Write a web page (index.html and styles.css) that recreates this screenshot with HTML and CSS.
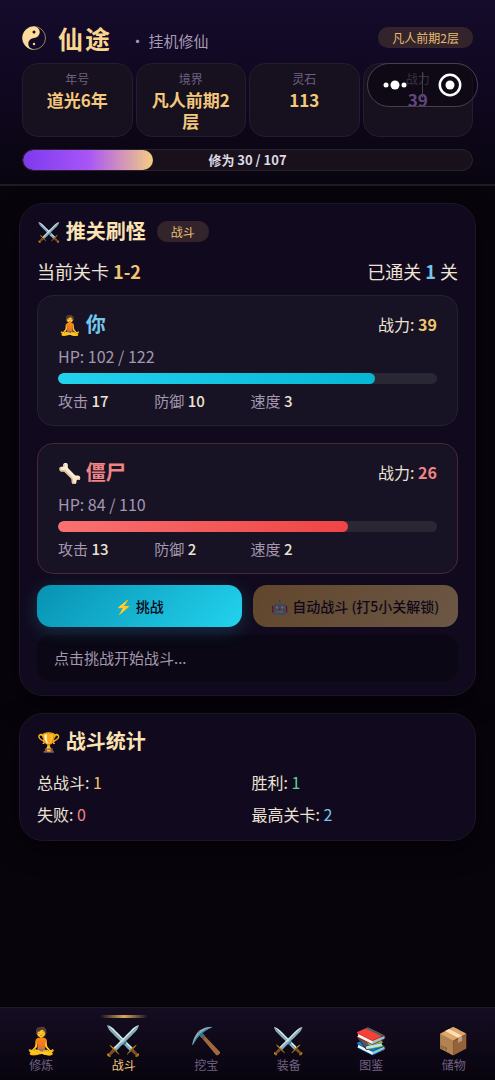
FILE: index.html
```html
<!DOCTYPE html>
<html lang="zh-CN">

<head>
    <meta charset="UTF-8">
    <meta name="viewport" content="width=device-width, initial-scale=1.0">
    <title>仙途 · 挂机修仙</title>
    <link rel="stylesheet" href="styles.css">
</head>

<body>
    <header class="top-bar">
        <div class="title-row">
            <svg class="logo" viewBox="0 0 24 24" aria-hidden="true">
                <circle cx="12" cy="12" r="11.5" fill="none" stroke="#f3cf8a" stroke-width="0.6" />
                <path d="M12 .5A11.5 11.5 0 0 0 12 23.5A5.75 5.75 0 0 1 12 12A5.75 5.75 0 0 0 12 .5Z" fill="#fbdc9c" />
                <circle cx="12" cy="6" r="1.500" fill="#120a22" />
                <circle cx="12" cy="18" r="1.200" fill="#fbdc9c" />
            </svg>
            <h1 class="title">仙途</h1>
            <span class="subtitle">· 挂机修仙</span>
            <span class="badge badge-right">凡人前期2层</span>
        </div>
        <div class="stats">
            <div class="stat"><span class="stat-label">年号</span><span class="stat-value">道光6年</span></div>
            <div class="stat"><span class="stat-label">境界</span><span class="stat-value">凡人前期2层</span></div>
            <div class="stat"><span class="stat-label">灵石</span><span class="stat-value">113</span></div>
            <div class="stat"><span class="stat-label">战力</span><span class="stat-value power">39</span></div>
        </div>
        <div class="exp">
            <div class="exp-fill" style="width: 29%"></div>
            <span class="exp-text">修为 30 / 107</span>
        </div>
        <div class="capsule">
            <button class="capsule-btn" type="button" aria-label="更多">
                <svg width="24" height="24" viewBox="0 0 24 24" fill="#fff">
                    <circle cx="3" cy="12" r="2.500" />
                    <circle cx="12" cy="12" r="4.500" />
                    <circle cx="21" cy="12" r="2.500" />
                </svg>
            </button>
            <button class="capsule-btn" type="button" aria-label="关闭">
                <svg width="24" height="24" viewBox="0 0 24 24">
                    <circle cx="12" cy="12" r="10.2" fill="none" stroke="#fff" stroke-width="2.500" />
                    <circle cx="12" cy="12" r="4.500" fill="#fff" />
                </svg>
            </button>
        </div>
    </header>

    <main class="content">
        <section class="card">
            <div class="card-head">
                <h2 class="card-title"><span class="emoji">⚔️</span>推关刷怪</h2>
                <span class="badge">战斗</span>
            </div>
            <div class="stage">
                <span>当前关卡 <b class="gold">1-2</b></span>
                <span>已通关 <b class="blue">1</b> 关</span>
            </div>

            <div class="fighter">
                <div class="fighter-head">
                    <h3 class="fighter-name blue"><span class="emoji">🧘</span>你</h3>
                    <span>战力: <b class="gold">39</b></span>
                </div>
                <div class="hp-text">HP: 102 / 122</div>
                <div class="hp-bar">
                    <div class="hp-fill" style="width: 83.6%"></div>
                </div>
                <div class="attrs">
                    <span>攻击 <b>17</b></span>
                    <span>防御 <b>10</b></span>
                    <span>速度 <b>3</b></span>
                </div>
            </div>

            <div class="fighter enemy">
                <div class="fighter-head">
                    <h3 class="fighter-name red"><span class="emoji">🦴</span>僵尸</h3>
                    <span>战力: <b class="red">26</b></span>
                </div>
                <div class="hp-text">HP: 84 / 110</div>
                <div class="hp-bar">
                    <div class="hp-fill" style="width: 76.4%"></div>
                </div>
                <div class="attrs">
                    <span>攻击 <b>13</b></span>
                    <span>防御 <b>2</b></span>
                    <span>速度 <b>2</b></span>
                </div>
            </div>

            <div class="actions">
                <button class="btn btn-fight" type="button">⚡ 挑战</button>
                <button class="btn btn-auto" type="button" disabled>🤖 自动战斗 (打5小关解锁)</button>
            </div>
            <div class="log">点击挑战开始战斗...</div>
        </section>

        <section class="card">
            <div class="card-head">
                <h2 class="card-title"><span class="emoji">🏆</span>战斗统计</h2>
            </div>
            <div class="totals">
                <span>总战斗: <span class="gold">1</span></span>
                <span>胜利: <span class="green">1</span></span>
                <span>失败: <span class="red">0</span></span>
                <span>最高关卡: <span class="blue">2</span></span>
            </div>
        </section>
    </main>

    <nav class="tabs">
        <button class="tab" type="button"><span class="tab-icon">🧘</span>修炼</button>
        <button class="tab active" type="button"><span class="tab-icon">⚔️</span>战斗</button>
        <button class="tab" type="button"><span class="tab-icon">⛏️</span>挖宝</button>
        <button class="tab" type="button"><span class="tab-icon">⚔️</span>装备</button>
        <button class="tab" type="button"><span class="tab-icon">📚</span>图鉴</button>
        <button class="tab" type="button"><span class="tab-icon">📦</span>储物</button>
    </nav>
</body>

</html>
```
FILE: styles.css
```css
* {
    box-sizing: border-box;
}

body {
    margin: 0;
    min-height: 100vh;
    display: flex;
    flex-direction: column;
    background: #07040c;
    color: #ece3d4;
    font-family: "Noto Sans CJK SC", "Noto Color Emoji", sans-serif;
    font-size: 16px;
    line-height: 24px;
}

h1,
h2,
h3 {
    margin: 0;
}

button {
    font-family: inherit;
    border: none;
    padding: 0;
    cursor: pointer;
}

.gold {
    color: #f0c572;
}

.blue {
    color: #74c7ec;
}

.red {
    color: #ee8484;
}

.green {
    color: #5fd09a;
}

/* header */
.top-bar {
    position: relative;
    padding: 20px 22px 13px;
    background: linear-gradient(180deg, #150b2b 0%, #100822 45%, #09050f 100%);
    border-bottom: 2px solid #1f1a26;
}

.title-row {
    display: flex;
    align-items: center;
    height: 35px;
    margin-bottom: 8px;
}

.logo {
    width: 24px;
    height: 24px;
    margin-right: 12px;
}

.title {
    font-size: 25px;
    letter-spacing: 2px;
    color: #f9d68f;
}

.subtitle {
    margin: 6px 0 0 18px;
    font-size: 15px;
    color: #a89bb3;
}

.badge {
    padding: 0 14px;
    border-radius: 10px;
    background: #33242c;
    color: #e6bd73;
    font-size: 12px;
    line-height: 21px;
}

.badge-right {
    margin-left: auto;
}

.stats {
    display: grid;
    grid-template-columns: repeat(4, 1fr);
    gap: 3px;
}

.stat {
    display: flex;
    flex-direction: column;
    min-height: 74px;
    padding: 5px 12px;
    border: 1px solid #241d2d;
    border-radius: 16px;
    background: #17101f;
    text-align: center;
}

.stat-label {
    font-size: 12px;
    line-height: 20px;
    color: #6f6080;
}

.stat-value {
    font-size: 17px;
    font-weight: bold;
    line-height: 21px;
    color: #f3c87c;
}

.stat-value.power {
    color: #c38af0;
}

.exp {
    position: relative;
    height: 22px;
    margin-top: 12px;
    border: 1px solid #2a222f;
    border-radius: 11px;
    background: #18111c;
    overflow: hidden;
}

.exp-fill {
    height: 100%;
    border-radius: 10px;
    background: linear-gradient(90deg, #7c3aed 0%, #a855f7 50%, #f5cc83 100%);
}

.exp-text {
    position: absolute;
    inset: 0;
    text-align: center;
    font-size: 13px;
    font-weight: bold;
    line-height: 20px;
    color: #dfdae6;
}

.capsule {
    position: absolute;
    top: 63px;
    right: 17px;
    display: flex;
    width: 111px;
    height: 44px;
    border: 1px solid #46404d;
    border-radius: 22px;
    background: rgba(5, 2, 10, 0.5);
}

.capsule-btn {
    flex: 1;
    display: flex;
    align-items: center;
    justify-content: center;
    margin: 8px 0;
    background: none;
}

.capsule-btn + .capsule-btn {
    border-left: 1px solid #46404d;
}

/* cards */
.content {
    flex: 1;
    display: flex;
    flex-direction: column;
    gap: 17px;
    padding: 17px 19px 90px;
}

.card {
    padding: 15px 17px 14px;
    border: 1px solid #1c1627;
    border-radius: 24px;
    background: #110a1e;
    box-shadow: 0 8px 24px rgba(0, 0, 0, 0.5);
}

.card-head {
    display: flex;
    align-items: center;
    gap: 11px;
    margin-bottom: 16px;
}

.card-title {
    display: flex;
    align-items: center;
    gap: 5px;
    font-size: 20px;
    color: #fbe3b4;
}

.emoji {
    font-size: 19px;
    font-weight: normal;
}

.stage {
    display: flex;
    justify-content: space-between;
    margin-bottom: 12px;
    font-size: 18px;
}

.fighter {
    padding: 16px 20px 12px;
    margin-bottom: 17px;
    border: 1px solid #262130;
    border-radius: 16px;
    background: #171324;
}

.fighter.enemy {
    margin-bottom: 11px;
    border-color: #4b2637;
}

.fighter-head {
    display: flex;
    justify-content: space-between;
    align-items: center;
    margin-bottom: 8px;
}

.fighter-name {
    display: flex;
    align-items: center;
    gap: 4px;
    font-size: 20px;
}

.hp-text {
    margin-bottom: 5px;
    color: #a497b0;
}

.hp-bar {
    height: 11px;
    border-radius: 6px;
    background: #2a2734;
    overflow: hidden;
}

.hp-fill {
    height: 100%;
    border-radius: 6px;
    background: linear-gradient(90deg, #22d3ee, #06b6d4);
}

.enemy .hp-fill {
    background: linear-gradient(90deg, #f87171, #ef4444);
}

.attrs {
    display: grid;
    grid-template-columns: repeat(4, 1fr);
    gap: 6px;
    margin-top: 5px;
    font-size: 15px;
    color: #a497b0;
}

.attrs b {
    font-weight: 500;
    color: #ece3d4;
}

.actions {
    display: grid;
    grid-template-columns: 1fr 1fr;
    gap: 11px;
    margin-bottom: 8px;
}

.btn {
    height: 42px;
    border-radius: 14px;
    font-size: 14px;
    font-weight: 500;
    color: #0b0714;
}

.btn-fight {
    background: linear-gradient(135deg, #0891b2, #22d3ee);
    box-shadow: 0 4px 18px rgba(34, 211, 238, 0.2);
}

.btn-auto {
    background: linear-gradient(135deg, #d9a03f, #f5cc83);
    opacity: 0.4;
}

.log {
    padding: 11px 17px;
    border-radius: 14px;
    background: #0b0714;
    font-size: 15px;
    color: #a497b0;
}

.totals {
    display: grid;
    grid-template-columns: 1fr 1fr;
    gap: 8px;
    padding-top: 1px;
}

/* bottom tabs */
.tabs {
    position: fixed;
    left: 0;
    right: 0;
    bottom: 0;
    display: flex;
    height: 73px;
    border-top: 1px solid #1f1a2a;
    background: linear-gradient(180deg, #150d22, #08040e);
}

.tab {
    position: relative;
    flex: 1;
    display: flex;
    flex-direction: column;
    align-items: center;
    padding-top: 17px;
    background: none;
    font-size: 12px;
    line-height: 16px;
    color: #6f6080;
}

.tab-icon {
    font-family: "Noto Color Emoji", sans-serif;
    font-size: 26px;
    line-height: 32px;
}

.tab.active {
    color: #f3c87c;
}

.tab.active .tab-icon {
    font-size: 29px;
}

.tab.active::before {
    content: "";
    position: absolute;
    top: 7px;
    width: 48px;
    height: 3px;
    background: linear-gradient(90deg, transparent, #d9a95c, transparent);
}
```
